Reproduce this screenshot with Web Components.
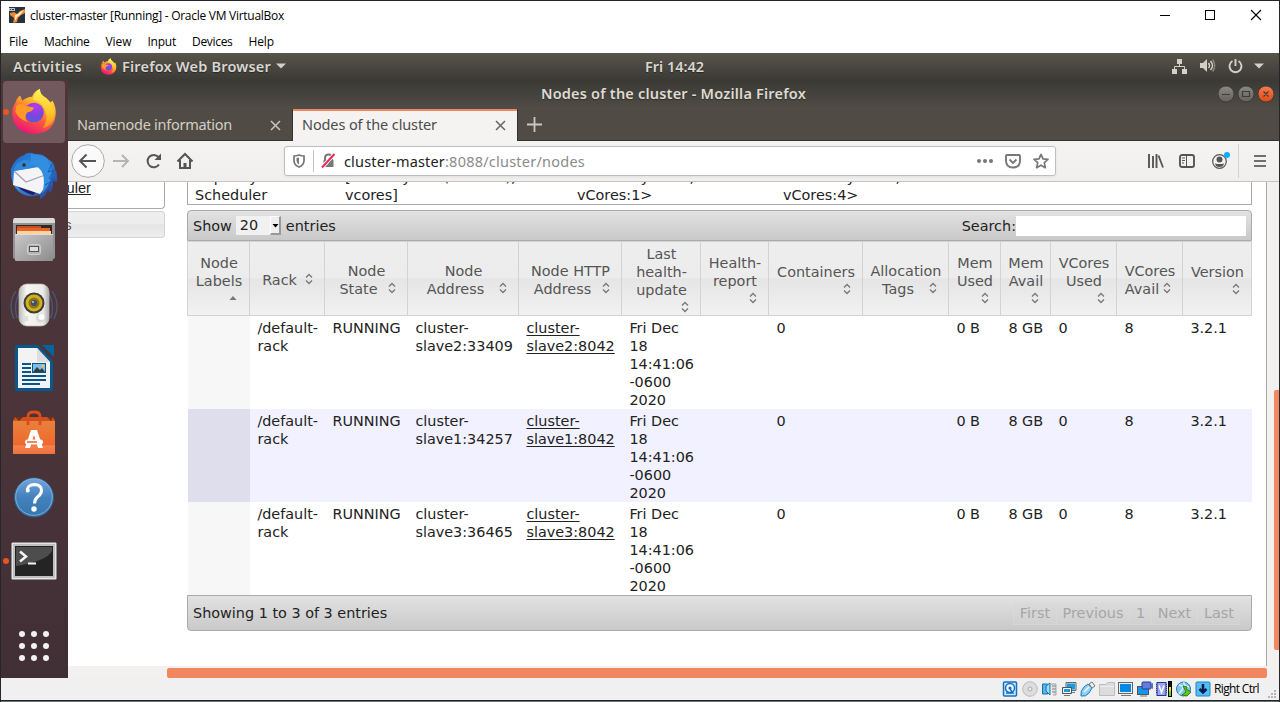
<!DOCTYPE html>
<html lang="en">
<head>
<meta charset="utf-8">
<title>cluster-master [Running] - Oracle VM VirtualBox</title>
<style>
html,body{margin:0;padding:0;width:1280px;height:702px;overflow:hidden;background:#24262c}
</style>
</head>
<body>
<vm-window></vm-window>
<script>
const define=(name,html,after)=>customElements.define(name,class extends HTMLElement{
  connectedCallback(){
    if(this.shadowRoot)return;
    const r=this.attachShadow({mode:'open'});
    r.innerHTML=typeof html==='function'?html(this):html;
    if(after)after(this,r);
  }
});

/* A single line of text, tracked so that it spans the width given in "w". */
define('fit-text','<style>:host{display:inline-block;white-space:pre}span{display:inline-block}</style><span><slot></slot></span>',(el,r)=>{
  const w=parseFloat(el.getAttribute('w')),n=el.textContent.length,s=r.querySelector('span');
  if(!w||!n)return;
  const cur=s.getBoundingClientRect().width;
  s.style.letterSpacing=((w-cur)/n)+'px';
  el.style.width=w+'px';
});

const firefox=`<svg viewBox="0 0 46 48" width="100%" height="100%"><defs><linearGradient id="f" x1=".8" y1="0" x2=".3" y2="1"><stop offset="0" stop-color="#fff04a"/><stop offset=".35" stop-color="#ffb52a"/><stop offset=".62" stop-color="#ff5a3c"/><stop offset="1" stop-color="#e8127c"/></linearGradient><radialGradient id="p" cx=".6" cy=".2" r=".9"><stop offset="0" stop-color="#b83af0"/><stop offset=".55" stop-color="#7a45e0"/><stop offset="1" stop-color="#4b63d8"/></radialGradient><linearGradient id="y" x1="0" y1="0" x2="0" y2="1"><stop offset="0" stop-color="#fff455"/><stop offset=".6" stop-color="#ffc62c"/><stop offset="1" stop-color="#ff8a2a"/></linearGradient></defs><path d="M4 15Q6 9 9 8L11 13Q16 9 21 9Q23 3 29 1Q29 7 35 10Q38 12 39 15L42 13Q46 20 45 28Q43 46 23 47Q3 46 1 28Q0 21 4 15Z" fill="url(#f)"/><path d="M29 1Q29 7 35 10Q43 16 44 27Q42 39 32 41Q38 33 34 22Q31 14 22 12Q23 4 29 1Z" fill="url(#y)"/><circle cx="23" cy="25" r="10" fill="url(#p)"/><path d="M5 18Q10 14 14 18L23 20Q22 24 16 25Q12 31 17 35Q7 32 4 24Z" fill="#ff9a27"/></svg>`;

define('vm-window',`<style>
:host{display:flex;flex-direction:column;box-sizing:border-box;width:1280px;height:702px;padding:1px 1px 0;background:#24262c;font:12px "Open Sans","Noto Sans",sans-serif;color:#000}
vm-title{height:30px}vm-menu{height:22px}
.screen{height:625px;display:flex;flex-direction:column}
gnome-bar{height:27px}
.desk{flex:1;display:flex;min-height:0}
dock-bar{width:67px}ff-window{flex:1;min-width:0}
vm-status{height:22px}
.edge{height:2px;background:linear-gradient(#20242b 50%,#66716f 50%)}
</style><vm-title></vm-title><vm-menu></vm-menu><div class="screen"><gnome-bar></gnome-bar><div class="desk"><dock-bar></dock-bar><ff-window></ff-window></div></div><vm-status></vm-status><div class="edge"></div>`);

define('vm-title',`<style>
:host{display:flex;align-items:center;background:#fff;box-sizing:border-box;padding:0 0 0 8px}
.logo{width:16px;height:16px;margin:-2px 5px 0 0}
fit-text{margin-top:-2px}
.sp{flex:1}.ctl{display:flex}.ctl svg{width:46px;height:30px;display:block}
</style><svg class="logo" viewBox="0 0 16 16"><rect width="16" height="16" fill="#28323e"/><path d="M1 6l4-1 3 2 3-3 5-2v4l-4 2-3 3-1 4-4 1 1-5-4-3z" fill="#f28a2c"/><path d="M6 8l3-1 2-2 4-2-4 5-3 2-2 4z" fill="#fff0cf"/><path d="M0 1h6v3h-6z" fill="#b9bec4"/><path d="M1 2h1v1h-1zM3 2h2v1h-2z" fill="#33404c"/></svg><fit-text w="254">cluster-master [Running] - Oracle VM VirtualBox</fit-text><span class="sp"></span><div class="ctl"><svg viewBox="0 0 46 30"><path d="M19 14.500h10" stroke="#000"/></svg><svg viewBox="0 0 46 30"><rect x="18.500" y="9.500" width="9" height="9" fill="none" stroke="#000"/></svg><svg viewBox="0 0 46 30"><path d="M18 9l10 10M28 9l-10 10" stroke="#000" stroke-width="1.100"/></svg></div>`);

define('vm-menu',`<style>:host{display:flex;align-items:center;background:#fff;box-sizing:border-box;padding:0 0 2px 8px}fit-text{margin-right:16px}</style>
<fit-text w="19">File</fit-text><fit-text w="45.500">Machine</fit-text><fit-text w="26">View</fit-text><fit-text w="28.500">Input</fit-text><fit-text w="40.500">Devices</fit-text><fit-text w="25.500">Help</fit-text>`);

define('gnome-bar',`<style>
:host{display:grid;grid-template-columns:644px auto 1fr;align-items:center;background:linear-gradient(#58544a,#3b3a36);color:#d9d7d1;font:600 14.500px "Noto Sans",sans-serif;text-shadow:0 1px 1px #0006;box-sizing:border-box;padding-bottom:1px}
fit-text{margin-top:-1px}
.l{display:flex;align-items:center;padding-left:12px}.ff{width:17px;height:17px;margin:0 5px 0 18px}
.l>svg{margin-left:5px}
.r{display:flex;justify-content:flex-end;align-items:center;padding-right:15px}svg{display:block}
</style><div class="l"><fit-text w="69">Activities</fit-text><div class="ff">${firefox}</div><fit-text w="149">Firefox Web Browser</fit-text><svg width="10" height="6"><path d="M0 .500h10l-5 5z" fill="#d3d0c8"/></svg></div>
<fit-text w="59">Fri 14:42</fit-text>
<div class="r"><svg width="16" height="16" viewBox="0 0 16 16" fill="#d3d0c8"><path d="M5 1h5v5h-5zM0 11h5v5h-5zM10 11h5v5h-5z"/><path d="M7.500 6v3M2.500 11v-2.500h10v2.500" fill="none" stroke="#d3d0c8"/></svg>
<svg width="16" height="16" viewBox="0 0 16 16" style="margin:0 12px 0 12px"><path d="M0 5h3l4-4v13l-4-4h-3z" fill="#d3d0c8"/><path d="M8.500 5q2 2.500 0 5M10.500 3q4 4.500 0 9" fill="none" stroke="#d3d0c8" stroke-width="1.500"/><path d="M12.700 1.500q4 6 0 12" fill="none" stroke="#85837b" stroke-width="1.500"/></svg>
<svg width="15" height="16" viewBox="0 0 15 16" style="margin-right:11px"><path d="M4.500 3a6 6 0 1 0 6 0M7.500 1v7" fill="none" stroke="#d3d0c8" stroke-width="1.900"/></svg>
<svg width="10" height="6"><path d="M0 .500h10l-5 5z" fill="#d3d0c8"/></svg></div>`);

define('dock-bar',`<style>
:host{display:flex;flex-direction:column;align-items:flex-start;box-sizing:border-box;background:linear-gradient(#503539,#4b353a 50%,#412f36);padding:1px 0 0 2px}
.t{width:62px;height:62px;margin-bottom:2.200px;display:flex;align-items:center;justify-content:center;position:relative;flex:none}
.t.on{background:#72595d;border-radius:4px}
.t.run::before{content:"";position:absolute;left:0;top:28px;width:6px;height:6px;border-radius:50%;background:#e95420}
svg{display:block}.ff{width:46px;height:47px;margin-top:-2px}
.g{margin:35px 0 0 15px}
</style>
<div class="t on run"><div class="ff">${firefox}</div></div>
<div class="t"><svg width="50" height="50" viewBox="0 0 50 50"><defs><linearGradient id="b" x1="0" y1="0" x2="1" y2="1"><stop offset="0" stop-color="#1b62c2"/><stop offset=".45" stop-color="#2f8ee4"/><stop offset="1" stop-color="#2a2f86"/></linearGradient></defs><path d="M2 18Q6 7 15 4Q19 0 26 3Q34 2 40 9Q45 11 46 18Q49 23 48 31L44 30Q45 37 41 42L39 38Q37 46 31 48L31 44Q18 48 9 40Q1 32 2 18Z" fill="url(#b)"/><path d="M4 30Q10 40 24 44L32 36 12 24Z" fill="#241a5e"/><path d="M5 20L36 15 36 36 31 43 4 34Z" fill="#f4f4f6"/><path d="M5 20L17 31 36 24" fill="none" stroke="#a3a3ab" stroke-width="1.300"/><path d="M5 20Q6 11 15 9Q25 8 22 17Z" fill="#2e89da"/><path d="M22 3Q37 4 42 16Q45 30 33 43Q40 18 22 13Z" fill="#318ee0"/><path d="M43 13L39 21 46 19 40 27 45 29 36 34" fill="none" stroke="#145fae"/><circle cx="15" cy="14" r="1.800" fill="#3b3026"/></svg></div>
<div class="t"><svg width="44" height="46" viewBox="0 0 44 46" style="margin-top:-2px"><defs><linearGradient id="a" x1="0" y1="0" x2="1" y2="1"><stop offset="0" stop-color="#c8c8c8"/><stop offset="1" stop-color="#8c8c8c"/></linearGradient></defs><rect x="1" y="2" width="42" height="41" rx="2" fill="#929292"/><path d="M3 2h38q2 0 2 5h-42q0-5 2-5z" fill="#dadada"/><rect x="4" y="9" width="36" height="15" fill="#302824"/><rect x="5" y="10" width="24" height="3" fill="#c1521f"/><rect x="5" y="12" width="33" height="8" fill="#e66424"/><path d="M5 15h34v4H5z" fill="#ffd2a0"/><rect x="3" y="18" width="38" height="27" rx="1" fill="url(#a)"/><path d="M3 18.500h38" stroke="#ddd"/><rect x="15.500" y="28.500" width="13" height="10" rx="2" fill="#b5b5b5" stroke="#cfcfcf"/><rect x="17.500" y="30.500" width="9" height="5" fill="#dedede" stroke="#555"/></svg></div>
<div class="t"><svg width="50" height="46" viewBox="0 0 50 46"><defs><linearGradient id="s"><stop offset="0" stop-color="#bcbcb9"/><stop offset=".25" stop-color="#f5f5f1"/><stop offset=".8" stop-color="#ecece8"/><stop offset="1" stop-color="#aaa"/></linearGradient></defs><path d="M7 9Q-2 22 5 37M11 10Q4 22 8 36M43 9Q52 22 45 37M39 10Q46 22 42 36" fill="none" stroke="#4d587c" stroke-width="1.300"/><rect x="10" y="2" width="30" height="42" rx="8" fill="url(#s)" stroke="#bbb" stroke-width=".7"/><circle cx="25" cy="21" r="10.500" fill="#3a3c3f"/><circle cx="25" cy="21" r="8.500" fill="#d4b11b"/><circle cx="25" cy="21" r="5.500" fill="#8d751c"/><circle cx="25" cy="21" r="3" fill="#3f5063"/><circle cx="24" cy="20" r="1" fill="#ccd"/><circle cx="31.500" cy="36" r="4.500" fill="#d8d8d4"/><circle cx="32.500" cy="35" r="3" fill="#fff"/><rect x="15" y="34" width="4" height="5" fill="#dedeDA"/></svg></div>
<div class="t"><svg width="42" height="48" viewBox="0 0 42 48" style="margin-top:-2px"><path d="M3 1h22l15 16v28q0 2-2 2h-34q-2 0-2-2v-42q0-2 1-2z" fill="#08588d"/><path d="M29 1h11q1 0 1 1v11z" fill="#0564a0"/><path d="M5 4h19l13 14v26h-32z" fill="#f3f3f3"/><path d="M24 4l13 14h-13z" fill="#dededd"/><path d="M9 20h9M9 24h9M9 28h9M9 32h24M9 36h24M9 40h18" stroke="#07568a" stroke-width="2"/><rect x="19.500" y="19.500" width="13" height="9" fill="#80bde5" stroke="#07568a"/><path d="M20 28l4-5 3 3 2-2 3 4z" fill="#353d3c"/><circle cx="30" cy="22" r="1.300" fill="#ffc43d"/></svg></div>
<div class="t"><svg width="44" height="46" viewBox="0 0 44 46"><defs><linearGradient id="o" x1="0" y1="0" x2="0" y2="1"><stop offset="0" stop-color="#e8813c"/><stop offset=".73" stop-color="#f0682e"/><stop offset=".75" stop-color="#f58250"/><stop offset="1" stop-color="#ed713c"/></linearGradient></defs><path d="M1 11l3-4h37l2 4z" fill="#7b2f12"/><path d="M1 11l2-4 4 4 4-4h24l4 4 2-4 2 4z" fill="#cf4f1d"/><path d="M1 11h42v33h-42z" fill="url(#o)"/><path d="M16 15v-9q0-4 6-4t6 4v9" fill="none" stroke="#dd4d1b" stroke-width="2.800"/><path d="M19 20h6l6 18h-5l-4-13-4 13h-5z" fill="#fff"/><rect x="13" y="29.500" width="18" height="5" rx="2.500" fill="#fff"/><path d="M15 32h10" stroke="#ed6028" stroke-width="1.500"/></svg></div>
<div class="t"><svg width="42" height="42" viewBox="0 0 42 42"><defs><linearGradient id="q" x1="0" y1="0" x2="0" y2="1"><stop offset="0" stop-color="#75a5dc"/><stop offset=".5" stop-color="#4381bd"/><stop offset="1" stop-color="#3675ab"/></linearGradient></defs><circle cx="21" cy="21.500" r="19.500" fill="url(#q)" stroke="#28618f"/><circle cx="21" cy="21" r="18.300" fill="none" stroke="#8db7df" stroke-width=".8"/><path d="M14.500 16q-1-7 6.500-7.500 7.500 0 7.500 6 0 3.500-4 6.500-3 2.300-3 6.500" fill="none" stroke="#fff" stroke-width="3"/><circle cx="14.900" cy="14.500" r="1.900" fill="#fff"/><circle cx="21" cy="33" r="2.700" fill="#fff"/></svg></div>
<div class="t run"><svg width="46" height="38" viewBox="0 0 46 38"><rect x=".5" y=".5" width="45" height="37" rx="1.500" fill="#bfbfbf" stroke="#8d8d8d"/><rect x="1.500" y="1.500" width="43" height="35" fill="none" stroke="#e4e4e4"/><rect x="4" y="4" width="38" height="30" fill="#242424"/><path d="M5 5h36v4Q36 19 5 24z" fill="#4c4d4c"/><path d="M9 9.500l6 5-6 5" fill="none" stroke="#f4f4f4" stroke-width="2.500"/><path d="M17 21.500h8" stroke="#f4f4f4" stroke-width="2"/></svg></div>
<svg class="g" width="32" height="32" viewBox="0 0 32 32" fill="#f3f1f1"><circle cx="4" cy="4" r="3"/><circle cx="16" cy="4" r="3"/><circle cx="28" cy="4" r="3"/><circle cx="4" cy="16" r="3"/><circle cx="16" cy="16" r="3"/><circle cx="28" cy="16" r="3"/><circle cx="4" cy="28" r="3"/><circle cx="16" cy="28" r="3"/><circle cx="28" cy="28" r="3"/></svg>`);

define('ff-window',`<style>
:host{display:flex;flex-direction:column;min-height:0}
ff-title{height:28px}ff-tabs{height:33px}ff-nav{height:41px}
.v{flex:1;display:flex;min-height:0;background:#fff}
.page{flex:1;min-width:0;overflow:hidden;display:flex;align-items:flex-start}
.vs{width:13px;box-sizing:border-box;border-left:1px solid #a9a8a6;background:#f2f1f0;padding:208px 0 0 7px}.vs i{display:block;height:260px;background:#f08763;border-radius:2px 0 0 2px}
.hs{height:12px;background:#f2f1f0;box-sizing:border-box;padding:2px 12px 0 99px}.hs i{display:block;height:10px;background:#f0875f;border-radius:2px}
</style><ff-title></ff-title><ff-tabs></ff-tabs><ff-nav></ff-nav><div class="v"><div class="page"><side-nav></side-nav><nodes-view></nodes-view></div><div class="vs"><i></i></div></div><div class="hs"><i></i></div>`);

define('ff-title',`<style>
:host{display:flex;align-items:center;background:linear-gradient(#3a3935,#4f4c45);color:#dfdbd2;font:600 14.500px "Noto Sans",sans-serif;text-shadow:0 1px 1px #0005;box-sizing:border-box;padding-left:473px}
fit-text{margin-top:-2px}
.sp{flex:1}svg{display:block;margin-right:5px}
</style><fit-text w="265">Nodes of the cluster - Mozilla Firefox</fit-text><span class="sp"></span><svg width="56" height="18" viewBox="0 0 56 18"><defs><linearGradient id="k" x1="0" y1="0" x2="0" y2="1"><stop offset="0" stop-color="#8b8981"/><stop offset="1" stop-color="#62615a"/></linearGradient><linearGradient id="c" x1="0" y1="0" x2="0" y2="1"><stop offset="0" stop-color="#f77c50"/><stop offset="1" stop-color="#df4a16"/></linearGradient></defs><g stroke="#34332f" stroke-width=".8"><circle cx="8" cy="9" r="8" fill="url(#k)"/><circle cx="28" cy="9" r="8" fill="url(#k)"/><circle cx="48" cy="9" r="8" fill="url(#c)"/></g><path d="M4 9.500h8M24.500 6.500h7v5h-7zM45.500 6.500l5 5M50.500 6.500l-5 5" fill="none" stroke="#3c3b37" stroke-width="1.200"/></svg>`);

define('ff-tabs',`<style>
:host{display:flex;background:#504c45;box-sizing:border-box;padding-top:1px;font:14.500px "Noto Sans",sans-serif;border-bottom:0}
.a,.b{display:flex;align-items:center;box-sizing:border-box;justify-content:space-between}
.a{width:224px;padding:0 11px 0 9px;color:#d2cfc6;border-bottom:1px solid #35332e}
.b{width:226px;background:#f4f3f2;color:#4c4c4c;border:1px solid #35332e;border-width:0 1px;box-shadow:inset 0 2px #f08763;padding:0 11px 0 9px}
fit-text{margin-top:-2px}
.a svg{margin-top:1px}
.c{flex:1;border-bottom:1px solid #35332e;padding:8px 0 0 9px}svg{display:block}
</style><div class="a"><fit-text w="155">Namenode information</fit-text><svg width="11" height="11"><path d="M1 1l9 9M10 1l-9 9" stroke="#c9c6bd" stroke-width="1.500"/></svg></div><div class="b"><fit-text w="135">Nodes of the cluster</fit-text><svg width="11" height="11"><path d="M1 1l9 9M10 1l-9 9" stroke="#666" stroke-width="1.500"/></svg></div><div class="c"><svg width="15" height="15"><path d="M7.500 0v15M0 7.500h15" stroke="#cbc8bf" stroke-width="1.800"/></svg></div>`);

define('ff-nav',`<style>
:host{display:flex;align-items:center;background:linear-gradient(#f4f3f2,#f0efed);border-bottom:1px solid #c6c4c1;box-sizing:border-box;padding-left:3px;font:14.500px "Noto Sans",sans-serif}
svg{display:block;flex:none;overflow:visible}
.u{width:772px;height:30px;box-sizing:border-box;border:1px solid #c1bfbd;border-radius:3px;background:#fff;display:flex;align-items:center;padding:0 6px 0 8px;box-shadow:0 1px 3px #0001;margin-left:91px}
.u i{width:1px;height:22px;background:#c5c5c5;margin:0 7px 0 8px}
.sp{flex:1}.d{width:1px;height:34px;background:#d4d3d1;margin:0 15px 0 9px}
</style>
<svg width="34" height="34" viewBox="0 0 34 34"><circle cx="17" cy="17" r="16.300" fill="#fafafa" stroke="#aaa"/><path d="M9.500 17h15.500M15.500 10.500L9 17l6.500 6.500" fill="none" stroke="#555" stroke-width="2"/></svg>
<svg style="margin-left:8px" width="16" height="16"><path d="M0 8h15M9 2l6 6-6 6" fill="none" stroke="#b5b4b3" stroke-width="2"/></svg>
<svg style="margin-left:17px" width="16" height="16"><path d="M13 11.500A6.200 6.200 0 1 1 12.500 4" fill="none" stroke="#555" stroke-width="2"/><path d="M15 .500v6.500h-6.500z" fill="#555"/></svg>
<svg style="margin-left:15px" width="16" height="16"><path d="M.5 8.500L8 1l7.500 7.500M3 7v8h10v-8" fill="none" stroke="#555" stroke-width="2"/><path d="M6.500 15v-5h3v5z" fill="#555"/></svg>
<div class="u"><svg width="12" height="14" style="margin-left:0"><path d="M1 2q2.500 0 5-1 2.500 1 5 1v4.500q0 4.500-5 6.500-5-2-5-6.500z" fill="none" stroke="#777" stroke-width="1.700"/><path d="M6 3.500v7Q3.500 9 3.500 6.500V4z" fill="#777"/></svg><i></i>
<svg width="15" height="16"><path d="M2.500 7h10v7h-10z" fill="#777"/><path d="M4 8v-3q0-3.500 3.500-3.500T11 5v3" fill="none" stroke="#777" stroke-width="2"/><path d="M13.500 1L1 14.500" stroke="#fff" stroke-width="4"/><path d="M13.500 1L1 14.500" stroke="#f02659" stroke-width="2"/></svg>
<fit-text w="101" style="margin-left:8px;color:#222">cluster-master</fit-text><fit-text w="140" style="color:#8b8b8b">:8088/cluster/nodes</fit-text><span class="sp"></span>
<svg width="16" height="4" fill="#777"><circle cx="2" cy="2" r="2"/><circle cx="8" cy="2" r="2"/><circle cx="14" cy="2" r="2"/></svg>
<svg style="margin-left:12px" width="16" height="15"><path d="M2 1h12q1 0 1 1v4.500q0 7-7 7t-7-7V2q0-1 1-1z" fill="none" stroke="#777" stroke-width="1.900"/><path d="M4.500 5.500L8 9l3.500-3.500" fill="none" stroke="#777" stroke-width="1.900"/></svg>
<svg style="margin-left:12px" width="16" height="16"><path d="M8 1.300l2 4.500 5 .5-3.700 3.400 1 5L8 12.200 3.700 14.700l1-5L1 6.300l5-.5z" fill="none" stroke="#777" stroke-width="1.700" stroke-linejoin="round"/></svg></div>
<span class="sp"></span>
<svg width="16" height="14"><path d="M1 0v14M5 2v12M8.500 0v14" stroke="#555" stroke-width="1.900"/><path d="M10.500 1.500L15 13.500" stroke="#555" stroke-width="1.800"/></svg>
<svg style="margin-left:15px" width="16" height="14"><rect x="1" y="1" width="14" height="12" rx="2" fill="none" stroke="#555" stroke-width="1.900"/><path d="M7.500 1v12" stroke="#555"/><path d="M3 4h3M3 6.500h3M3 9h2" stroke="#555"/></svg>
<svg style="margin:0 2px 0 17px" width="15" height="15"><circle cx="7.500" cy="7.500" r="6.800" fill="none" stroke="#555" stroke-width="1.200"/><circle cx="7.500" cy="5.500" r="3" fill="#555"/><path d="M3 9.500q4.500 1 9 0-.5 3.500-4.500 3.500T3 9.500z" fill="#555"/><circle cx="15" cy="1" r="3" fill="#00b0ff"/></svg>
<i class="d"></i><svg style="margin-right:13px" width="12" height="12"><path d="M0 1h12M0 6h12M0 11h12" stroke="#444" stroke-width="1.700"/></svg>`);

define('side-nav',`<style>
:host{display:block;width:119px;flex:none;color:#222;font:14.670px "Liberation Sans",Arial,sans-serif}
.box{width:97px;height:27px;box-sizing:border-box;border:1px solid #aaa;border-width:0 1px 1px 0;border-radius:0 0 4px 0;line-height:13px}
.box span{display:inline-block;text-decoration:underline}
.h{margin-top:2px;width:97px;height:27px;box-sizing:border-box;border:1px solid #d3d3d3;border-left:0;border-radius:0 4px 4px 0;background:linear-gradient(#eee 45%,#e4e4e4 52%,#eee);line-height:27px;color:#555;overflow:hidden}
.h span{display:inline-block}.hidden{overflow:hidden;height:100%}
</style><div class="box"><div class="hidden"><span>Scheduler</span></div></div><div class="h"><span>Tools</span></div>`,(el,r)=>{
  const a=r.querySelector('.box span'),b=r.querySelector('.h span');
  a.style.marginLeft=(23-a.getBoundingClientRect().width)+'px';
  b.style.marginLeft=(3.500-b.getBoundingClientRect().width)+'px';
});

define('sort-icon',el=>`<style>:host{display:block;width:8px;height:12px}svg{display:block}</style>${el.hasAttribute('asc')?'<svg width="8" height="12"><path d="M.5 8L4 4l3.500 4z" fill="#777"/></svg>':'<svg width="8" height="12"><path d="M1 4.500L4 1.500l3 3M1 7.500L4 10.500l3-3" fill="none" stroke="#777" stroke-width="1.300"/></svg>'}`);

const heads=[[12,50,['Node','Labels']],[29,31,['Rack'],1],[20,40,['Node','State'],1],[20,40,['Node','Address'],1],[20,40,['Node HTTP','Address'],1],[3,59,['Last','health-','update']],[12,50,['Health-','report']],[21,41,['Containers']],[20,40,['Allocation','Tags'],1],[12,50,['Mem','Used']],[12,50,['Mem','Avail']],[12,50,['VCores','Used']],[20,40,['VCores','Avail'],1],[21,41,['Version']]];
const row=(s,p)=>['',`/default-<br>rack`,'RUNNING',`cluster-<br>slave${s}:${p}`,`<u>cluster-</u><br><u>slave${s}:8042</u>`,'Fri Dec<br>18<br>14:41:06<br>-0600<br>2020','','0','','0 B','8 GB','0','8','3.2.1'].map(c=>`<div>${c}</div>`).join('');

define('nodes-view',`<style>
:host{display:block;width:1065px;color:#222;font:14.400px/18px "DejaVu Sans",sans-serif}
.m{display:grid;grid-template-columns:150px 232px 206px 1fr;height:23px;box-sizing:border-box;border:1px solid #aaa;border-top:0;padding-left:7px;overflow:hidden}
.m div{margin-top:-14px;white-space:nowrap}
.bar{display:flex;align-items:center;box-sizing:border-box;border:1px solid #aaa;background:linear-gradient(#e2e2e2,#c9c9c9);padding:0 5px}
.top{height:31px;margin-top:5px;border-radius:4px 4px 0 0}
.bot{height:36px;border-radius:0 0 4px 4px}
.sel{display:flex;width:45px;height:19px;background:#f1f1f1;margin:0 5px 0 4px;line-height:19px}
.sel span{flex:1;padding-left:4px}.sel svg{border:1px solid #fff;border-right:2px solid #999;border-bottom:2px solid #999;background:#efefef;box-sizing:border-box}
.sp{flex:1}.in{width:230px;height:20px;background:#fff}
.g{display:grid;grid-template-columns:63px 75px 83px 111px 103px 79px 68px 94px 86px 52px 50px 66px 66px 69px}
.h{height:75px;color:#555;box-sizing:border-box;border:1px solid #d3d3d3;border-right:0;border-left:0;background:linear-gradient(#eee 0,#ececec 49%,#e5e5e5 51%,#f2f2f2)}
.c{display:grid;border-right:1px solid #d3d3d3;text-align:center;white-space:nowrap}
.c:first-child{border-left:1px solid #d3d3d3}
.c>*{grid-area:1/1}.c>div{padding-left:1px}.c sort-icon{justify-self:end;margin-right:11px}.c:first-child sort-icon{margin-right:12px}
.c .s{margin-right:16px}
.r{height:93px}.r div{padding:3px 0 0 7.400px;white-space:nowrap}
.r div:first-child{background:#f7f7f7;margin-left:1px}
.r.o{background:#f1f1ff;margin-left:1px}.r.o{grid-template-columns:62px 75px 83px 111px 103px 79px 68px 94px 86px 52px 50px 66px 66px 69px}.r.o div:first-child{background:#dedeec;margin-left:0}
u{text-decoration-thickness:1px;text-underline-offset:2px}
.p{display:flex;color:#a6a6a6;margin-right:6px}
.p span{box-sizing:border-box;height:23px;background:#d8d8d866;border:1px solid #dcdcdc77;border-width:1px 0 1px 1px;line-height:20px;text-align:center}
</style>
<div class="m"><div>Capacity<br>Scheduler</div><div>[memory-mb (unit=Mi),<br>vcores]</div><div>&lt;memory:1024,<br>vCores:1&gt;</div><div>&lt;memory:8192,<br>vCores:4&gt;</div></div>
<div class="bar top"><span>Show</span><div class="sel"><span>20</span><svg width="11" height="19"><path d="M1.500 7h6l-3 3.500z"/></svg></div><span>entries</span><span class="sp"></span><span>Search:</span><div class="in"></div></div>
<div class="g h">${heads.map(([t,i,l,s],k)=>`<div class="c"><div style="padding-top:${t}px">${l.map((x,j)=>`<div class="${s&&j===l.length-1?'s':''}">${x}</div>`).join('')}</div><sort-icon ${k?'':'asc'} style="margin-top:${i}px"></sort-icon></div>`).join('')}</div>
<div class="g r">${row(2,33409)}</div><div class="g r o">${row(1,34257)}</div><div class="g r">${row(3,36465)}</div>
<div class="bar bot"><span>Showing 1 to 3 of 3 entries</span><span class="sp"></span><div class="p"><span style="width:43px">First</span><span style="width:73px">Previous</span><span style="width:22px">1</span><span style="width:46px">Next</span><span style="width:43px">Last</span></div></div>`);

define('vm-status',`<style>
:host{display:flex;align-items:center;justify-content:flex-end;background:#f0f0f0;box-sizing:border-box;padding-right:2px;font-size:12px}
svg{display:block;margin-right:3px;flex:none}fit-text{margin:-1px 0 0}
</style>
<svg width="16" height="16"><rect x="1.500" y="1" width="13" height="14" rx="1" fill="#c7ebff" stroke="#176fc1" stroke-width="1.500"/><circle cx="8" cy="7" r="4.500" fill="#f4fbff" stroke="#176fc1" stroke-width="1.500"/><circle cx="8" cy="7" r="1.600" fill="#176fc1"/><path d="M8 8l3 4h-7" fill="none" stroke="#176fc1" stroke-width="1.500"/></svg>
<svg width="16" height="16" style="margin-left:1px"><circle cx="8" cy="8" r="7.300" fill="#ddd" stroke="#bbb"/><circle cx="8" cy="8" r="2" fill="#eee" stroke="#aaa"/></svg>
<svg width="17" height="16"><path d="M1.500 3h5v10h-5z" fill="#55b9ec" stroke="#176fa8"/><path d="M5 5l4-3v12l-4-4z" fill="#9bdcf9" stroke="#176fa8"/><path d="M10 3h5v11h-3" fill="#ddd" stroke="#aaa"/><path d="M11 5h4M11 8h4M11 11h4" stroke="#888"/></svg>
<svg width="16" height="16"><path d="M5.500 2h9v7h-9z" fill="#169be7" stroke="#e8e8e8"/><path d="M5 1.500h10v8h-10z" fill="none" stroke="#666"/><path d="M1.500 6.500h9v6h-9z" fill="#169be7" stroke="#555"/><path d="M2.500 7.500h7v4h-7z" fill="none" stroke="#fff"/><path d="M3 14.500h6M11 11.500h3" stroke="#777"/></svg>
<svg width="16" height="16"><path d="M1 15q-1-5 3-9l4-3 4 4-3 5q-3 4-8 3z" fill="#8bd1fa" stroke="#247bb6"/><path d="M9 3l3-2 3 4-3 2z" fill="#eee" stroke="#777"/><path d="M4 11l5-5" stroke="#fff" stroke-width="1.500"/></svg>
<svg width="16" height="16"><path d="M.5 14.500v-11h6l2-2h7v13z" fill="#dcdcdc" stroke="#bdbdbd"/><path d="M1 5.500h14" stroke="#eee"/></svg>
<svg width="16" height="16"><rect x=".5" y="1.500" width="14" height="11" fill="#eee" stroke="#666"/><rect x="2" y="3" width="11" height="8" fill="#078ae5"/><path d="M3 14.500h10" stroke="#777"/></svg>
<svg width="16" height="16"><rect x=".5" y="5.500" width="11" height="8" fill="#1397e9" stroke="#555"/><rect x="5" y="1" width="9" height="7" rx="1" fill="#657cda" stroke="#263d9a"/><path d="M14 3l2-1v6l-2-1z" fill="#596ecb"/><path d="M3 15h7" stroke="#777"/></svg>
<svg width="17" height="16"><rect x="1" y="1.500" width="9" height="13" fill="#9ba5ed" stroke="#27378f"/><path d="M3 4.500l2.500 7 2.500-7" fill="none" stroke="#fff" stroke-width="1.500"/><path d="M.5 3v10M10.500 3v10" stroke="#27378f" stroke-dasharray="1 1"/><rect x="12.500" y=".5" width="3" height="15" fill="#111" stroke="#000"/><path d="M14 6v4" stroke="#eeea21" stroke-width="2"/><path d="M14 10v5" stroke="#67d519" stroke-width="2"/></svg>
<svg width="16" height="16"><circle cx="7.500" cy="8" r="7" fill="#7cc8f1" stroke="#247db1"/><path d="M3 4q6 1 3 5t-3 4M8 1q-1 4 5 5" fill="none" stroke="#d8f2ff" stroke-width="1.500"/><path d="M7 5l4 1-1 2 5 3-4 4-5-1 4-3z" fill="#65c622" stroke="#31800e"/></svg>
<svg width="16" height="16"><rect x="1" y="1" width="14" height="14" rx="1" fill="#55bdf2" stroke="#1984c5"/><path d="M8 3v8M4.500 8L8 11.500 11.500 8" fill="none" stroke="#05204d" stroke-width="2.500"/></svg>
<fit-text w="45">Right Ctrl</fit-text>
<svg style="margin:10px 0 0 9px" width="9" height="9" fill="#b5b5b5"><path d="M6 0h2v2h-2zM3 3h2v2h-2zM6 3h2v2h-2zM0 6h2v2h-2zM3 6h2v2h-2zM6 6h2v2h-2z"/></svg>`);
</script>
</body>
</html>
